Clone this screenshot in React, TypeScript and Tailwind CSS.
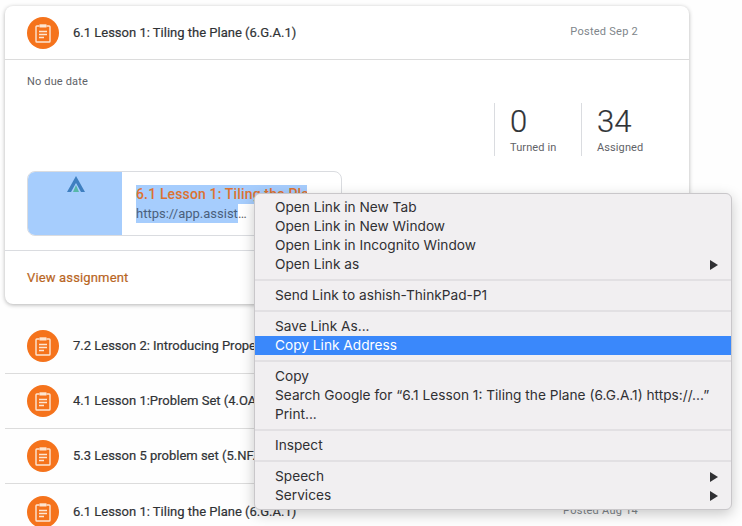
import React from "react";

const sans = "font-['Roboto',_'Liberation_Sans',_sans-serif]";

function AssignIcon() {
  return (
    <div className="flex h-8 w-8 shrink-0 items-center justify-center rounded-full bg-[#f5731c]">
      <svg width="18" height="20" viewBox="0 0 18 20" fill="none" stroke="#fde6d3" strokeWidth="1.4">
        <path d="M5.5 3H2.8A.8.8 0 0 0 2 3.8v14.4a.8.8 0 0 0 .8.8h12.4a.8.8 0 0 0 .8-.8V3.8a.8.8 0 0 0-.8-.8h-2.7" />
        <rect x="5.5" y="1.3" width="7" height="3.2" fill="#fde6d3" stroke="none" />
        <path d="M5 8.5h8M5 11.5h8M5 14.5h5" />
      </svg>
    </div>
  );
}

function Row({ title, posted, last, first }: { title: string; posted?: string; last?: boolean; first?: boolean }) {
  return (
    <div className={`flex shrink-0 items-center pl-[22px] pr-[51px] ${first ? "h-[54px]" : "h-[55px]"} ${last ? "" : "border-b border-[#dcdcdc]"}`}>
      <AssignIcon />
      <span className="ml-[14px] flex-1 whitespace-nowrap text-[13px] text-[#303336] [-webkit-text-stroke:0.2px_#303336]">{title}</span>
      {posted && <span className="text-[11px] tracking-[0.25px] text-[#80868b]">{posted}</span>}
    </div>
  );
}

function Stat({ n, label }: { n: string; label: string }) {
  return (
    <div className="h-[53px] whitespace-nowrap border-l border-[#dadce0] pl-[15px]">
      <div className="text-[31px] font-light leading-[38px] text-[#303336] [-webkit-text-stroke:0.2px_#303336]">{n}</div>
      <div className="text-[11px] leading-[14px] tracking-[0.1px] text-[#5f6368]">{label}</div>
    </div>
  );
}

function Item({ label, arrow, active }: { label: string; arrow?: boolean; active?: boolean }) {
  return (
    <div className={`flex h-[19px] items-center justify-between pl-[20px] pr-[13px] text-[13.7px] leading-[19px] ${active ? "bg-[#3a88fb] text-white" : "text-[#303033]"}`}>
      <span className="whitespace-nowrap">{label}</span>
      {arrow && <span className="h-0 w-0 border-y-[5px] border-l-[8px] border-y-transparent border-l-[#303033]" />}
    </div>
  );
}

const Sep = () => <div className="my-[5px] h-[2px] bg-[#e2e0e3]" />;

export default function App() {
  return (
    <div className={`relative h-[526px] w-[742px] overflow-hidden bg-[#fefefe] pl-[5px] pt-[6px] ${sans}`}>
      <div className="w-[684px] rounded-lg bg-white shadow-[0_1px_4px_rgba(0,0,0,0.3)]">
        <Row first title="6.1 Lesson 1: Tiling the Plane (6.G.A.1)" posted="Posted Sep 2" />
        <div className="px-[22px] pt-[15px]">
          <div className="text-[11px] leading-[14px] tracking-[0.15px] text-[#5f6368]">No due date</div>
          <div className="mt-[14px] flex justify-end gap-[30px] pr-[23px]">
            <div className="w-[57px]"><Stat n="0" label="Turned in" /></div>
            <div className="w-[63px]"><Stat n="34" label="Assigned" /></div>
          </div>
          <div className="mt-[15px] flex h-[65px] w-[315px] overflow-hidden rounded-lg border border-[#dadce0]">
            <div className="flex w-[94px] shrink-0 justify-center bg-[#a6cdfd] pl-[2px] pt-[4px]">
              <svg width="18" height="16" viewBox="0 0 18 16">
                <path d="M9 0 0 16h4L9 7l5 9h4z" fill="#3f7fc0" />
                <path d="M9 9l-3 7h6z" fill="#57b8a8" />
              </svg>
            </div>
            <div className="pl-[14px] pt-[13px]">
              <div className="w-[171px] overflow-hidden whitespace-nowrap bg-[#a6cdfd] text-[14px] font-medium leading-[19px] tracking-[0.15px] text-[#dd7230]">
                6.1 Lesson 1: Tiling the Plane
              </div>
              <div className="flex items-center text-[13px] leading-[19px] text-[#4a5f7c]">
                <span className="w-[102px] overflow-hidden whitespace-nowrap bg-[#a6cdfd]">https://app.assist</span>
                <span className="text-[#5f6368]">…</span>
              </div>
            </div>
          </div>
        </div>
        <div className="mt-[14px] flex h-[54px] items-center border-t border-[#dadce0] pl-[22px] text-[13px] tracking-[0.15px] text-[#b9661f] [-webkit-text-stroke:0.2px_#b9661f]">
          View assignment
        </div>
      </div>

      <div className="mt-[15px] w-[684px]">
        <Row title="7.2 Lesson 2: Introducing Properties of Area" />
        <Row title="4.1 Lesson 1:Problem Set (4.OA.A.1)" />
        <Row title="5.3 Lesson 5 problem set (5.NF.B.4)" />
        <Row title="6.1 Lesson 1: Tiling the Plane (6.G.A.1)" posted="Posted Aug 14" last />
      </div>

      <div className="absolute left-[254px] top-[193px] w-[478px] rounded-md border border-[#c9c7ca] bg-[#f1eff1] py-[4px] font-['Inter',_sans-serif] shadow-[0_4px_14px_rgba(0,0,0,0.22)]">
        <Item label="Open Link in New Tab" />
        <Item label="Open Link in New Window" />
        <Item label="Open Link in Incognito Window" />
        <Item label="Open Link as" arrow />
        <Sep />
        <Item label="Send Link to ashish-ThinkPad-P1" />
        <Sep />
        <Item label="Save Link As..." />
        <Item label="Copy Link Address" active />
        <Sep />
        <Item label="Copy" />
        <Item label="Search Google for “6.1 Lesson 1: Tiling the Plane (6.G.A.1) https://...”" />
        <Item label="Print..." />
        <Sep />
        <Item label="Inspect" />
        <Sep />
        <Item label="Speech" arrow />
        <Item label="Services" arrow />
      </div>
    </div>
  );
}
